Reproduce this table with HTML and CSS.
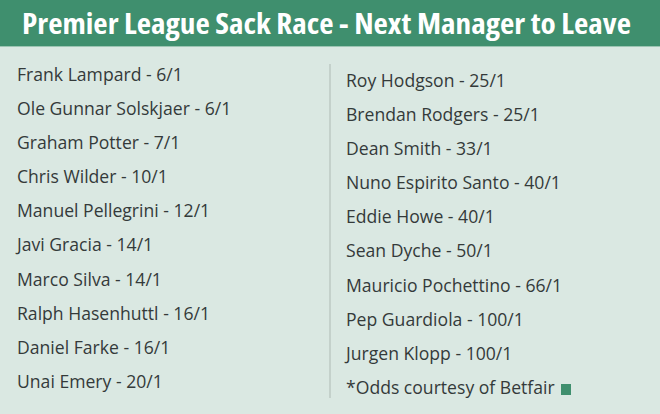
FILE: index.html
```
<!DOCTYPE html>
<html>
<head>
<meta charset="utf-8">
<link rel="stylesheet" href="styles.css">
</head>
<body>
<div class="card">
  <div class="header"><h1 class="title">Premier League Sack Race - Next Manager to Leave</h1></div>
  <div class="cols">
    <ul class="col col-left">
      <li>Frank Lampard - 6/1</li>
      <li>Ole Gunnar Solskjaer - 6/1</li>
      <li>Graham Potter - 7/1</li>
      <li>Chris Wilder - 10/1</li>
      <li>Manuel Pellegrini - 12/1</li>
      <li>Javi Gracia - 14/1</li>
      <li>Marco Silva - 14/1</li>
      <li>Ralph Hasenhuttl - 16/1</li>
      <li>Daniel Farke - 16/1</li>
      <li>Unai Emery - 20/1</li>
    </ul>
    <div class="divider"></div>
    <ul class="col col-right">
      <li>Roy Hodgson - 25/1</li>
      <li>Brendan Rodgers - 25/1</li>
      <li>Dean Smith - 33/1</li>
      <li>Nuno Espirito Santo - 40/1</li>
      <li>Eddie Howe - 40/1</li>
      <li>Sean Dyche - 50/1</li>
      <li>Mauricio Pochettino - 66/1</li>
      <li>Pep Guardiola - 100/1</li>
      <li>Jurgen Klopp - 100/1</li>
      <li>*Odds courtesy of Betfair <span class="sq"></span></li>
    </ul>
  </div>
</div>
</body>
</html>
```
FILE: styles.css
```
html, body {
  margin: 0;
  padding: 0;
  background: #dae8e2;
}
.card {
  width: 660px;
  height: 414px;
  background: #dae8e2;
  overflow: hidden;
}
.header {
  height: 46px;
  background: #3f8f6e;
  border-bottom: 1px solid #9cc5b3;
  display: flex;
  align-items: center;
  padding-left: 22px;
}
.title {
  margin: 0;
  color: #ffffff;
  font-family: "Open Sans", sans-serif;
  font-weight: 700;
  font-size: 28px;
  font-stretch: condensed;
  white-space: nowrap;
  transform: scaleX(1.115);
  transform-origin: left center;
}
.cols {
  display: flex;
}
.col {
  list-style: none;
  margin: 0;
  padding: 0;
  font-family: "Open Sans", sans-serif;
  font-size: 17.6px;
  color: #343a3a;
}
.col li {
  height: 34.1px;
  line-height: 34.1px;
  white-space: nowrap;
}
.col-left {
  width: 312px;
  padding: 10px 0 0 17px;
}
.divider {
  width: 2px;
  background: #c4d1cb;
  margin-top: 17px;
  height: 334px;
}
.col-right {
  padding: 16px 0 0 15px;
}
.sq {
  display: inline-block;
  width: 10px;
  height: 11px;
  background: #3f8f6e;
  vertical-align: -1px;
  margin-left: 2px;
}
```
